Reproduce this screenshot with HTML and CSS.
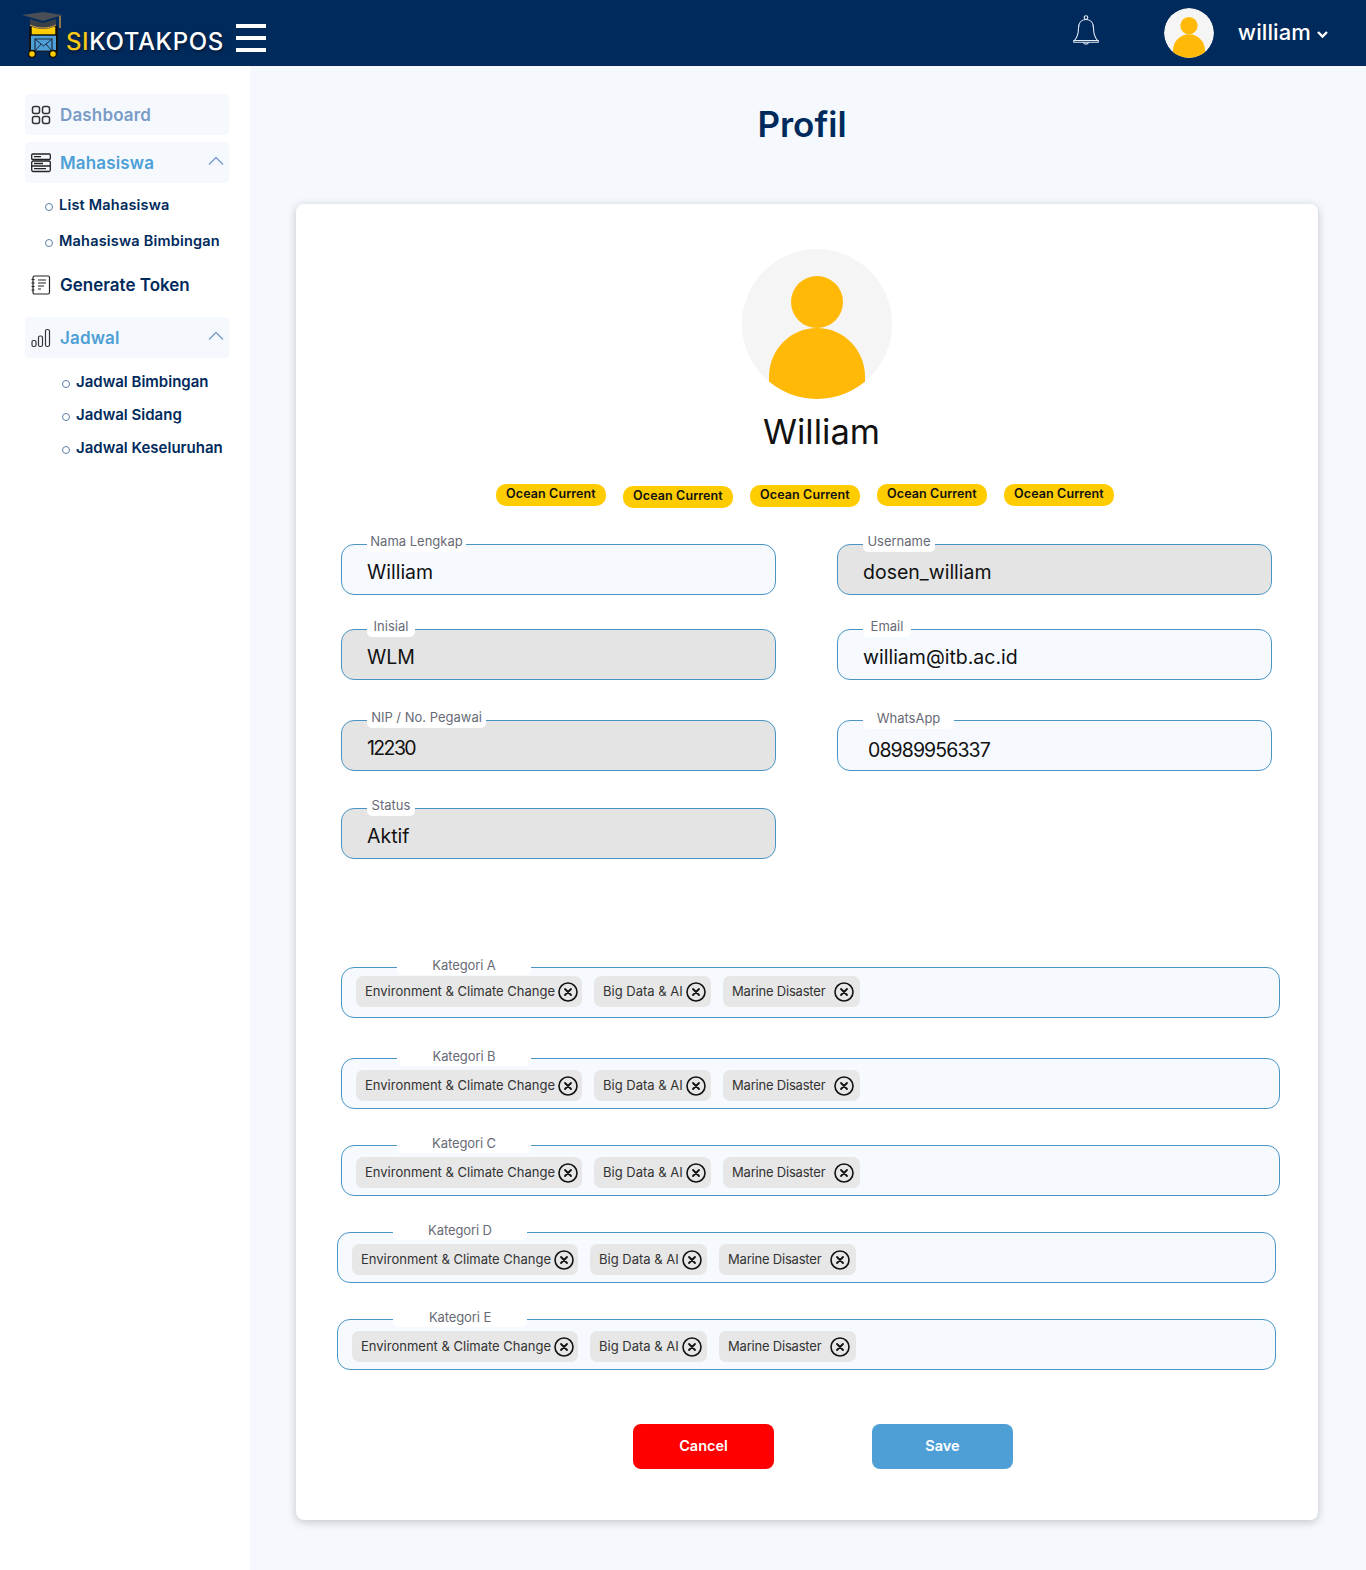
FILE: index.html
```html
<!DOCTYPE html>
<html lang="id">
<head>
    <meta charset="UTF-8">
    <meta name="viewport" content="width=device-width, initial-scale=1.0">
    <title>Profil - SIKOTAKPOS</title>
    <link rel="stylesheet" href="styles.css">
</head>
<body>
    <svg class="icon-defs" width="0" height="0">
        <symbol id="chip-close" viewBox="0 0 20 20">
            <circle cx="10" cy="10" r="9" fill="none" stroke="#111" stroke-width="1.6"/>
            <path d="M7 7l6 6M13 7l-6 6" stroke="#111" stroke-width="1.8" stroke-linecap="round"/>
        </symbol>
        <symbol id="chevron-up" viewBox="0 0 16 10">
            <path d="M1 8.5L8 1.5l7 7" fill="none" stroke="#7a9cc6" stroke-width="1.4"/>
        </symbol>
        <symbol id="person" viewBox="0 0 150 150">
            <circle cx="75" cy="75" r="75" fill="#f5f5f5"/>
            <clipPath id="person-clip"><circle cx="75" cy="75" r="75"/></clipPath>
            <g clip-path="url(#person-clip)" fill="#ffb906">
                <ellipse cx="75" cy="53" rx="26" ry="26"/>
                <path d="M27 150V128C27 100 49 79 75 79s48 21 48 49v22z"/>
            </g>
        </symbol>
    </svg>

    <header class="topbar">
        <div class="brand">
            <svg class="brand-logo" width="44" height="46" viewBox="0 0 44 46">
                <path d="M9 16h27v23H9z" fill="#4e9fd5" stroke="#111" stroke-width="2"/>
                <path d="M10 14h25v9H10z" fill="#ffcc00" stroke="#111" stroke-width="1.5"/>
                <path d="M14 27h17v12H14z" fill="#4e9fd5" stroke="#1c2b45" stroke-width="1.2"/>
                <path d="M14 27l8.500 7 8.500-7M14 39l6-7M31 39l-6-7" fill="none" stroke="#1c2b45" stroke-width="1"/>
                <circle cx="11" cy="42" r="3.500" fill="#ffcc00" stroke="#111" stroke-width="1.500"/>
                <circle cx="32" cy="42" r="3.500" fill="#ffcc00" stroke="#111" stroke-width="1.500"/>
                <path d="M1 3L22 0l20 3-20 6z" fill="#4a4f57"/>
                <path d="M9 7v7c8 4 18 4 26 0V7l-13 4z" fill="#3c4048"/>
                <path d="M9 13c8 4 18 4 26 0" fill="none" stroke="#d9a441" stroke-width="1"/>
                <path d="M39 4v12" stroke="#d9a441" stroke-width="1.300"/>
            </svg>
            <span class="brand-name"><span class="brand-si">SI</span>KOTAKPOS</span>
        </div>
        <div class="hamburger"><span></span><span></span><span></span></div>
        <div class="topbar-right">
            <svg class="bell" width="26" height="31" viewBox="0 0 26 31" fill="none" stroke="#e4ecf5" stroke-width="1.100">
                <circle cx="13" cy="2.500" r="1.800"/>
                <path d="M13 4.500c-5 0-7.500 3.800-7.500 8.500 0 5-1 9-4 12.500h23c-3-3.500-4-7.500-4-12.500 0-4.700-2.500-8.500-7.500-8.500z"/>
                <path d="M.8 25.500h24.400v1.800H.8zM10.500 27.300c.3 2.400 4.700 2.400 5 0"/>
            </svg>
            <svg class="top-avatar" width="50" height="50"><use href="#person"/></svg>
            <span class="top-user">william</span>
            <svg class="top-caret" width="13" height="9" viewBox="0 0 12 9">
                <path d="M1.500 2l4.500 4.500L10.500 2" fill="none" stroke="#fff" stroke-width="2.400"/>
            </svg>
        </div>
    </header>

    <div class="layout">
        <aside class="sidebar">
            <a class="menu-item menu-box menu-muted" href="#">
                <svg class="menu-icon" width="20" height="20" viewBox="0 0 20 20" fill="none" stroke="#333" stroke-width="1.500">
                    <rect x="1.500" y="1.500" width="7" height="7" rx="2"/><rect x="11.500" y="1.500" width="7" height="7" rx="2"/>
                    <rect x="1.500" y="11.500" width="7" height="7" rx="2"/><rect x="11.500" y="11.500" width="7" height="7" rx="2"/>
                </svg>
                Dashboard
            </a>
            <a class="menu-item menu-box menu-open menu-mahasiswa" href="#">
                <svg class="menu-icon" width="20" height="20" viewBox="0 0 20 20" fill="none" stroke="#222" stroke-width="1.300">
                    <rect x=".7" y="1" width="18.600" height="5.500" rx="1"/><rect x=".7" y="8" width="18.600" height="10.500" rx="1.500"/>
                    <path d="M.7 13h18.600M3 3.700h7M3 10.500h9M3 15.700h12"/>
                </svg>
                Mahasiswa
                <svg class="menu-chevron" width="16" height="10"><use href="#chevron-up"/></svg>
            </a>
            <ul class="submenu submenu-one">
                <li>List Mahasiswa</li>
                <li>Mahasiswa Bimbingan</li>
            </ul>
            <a class="menu-item menu-token" href="#">
                <svg class="menu-icon" width="20" height="20" viewBox="0 0 20 20" fill="none" stroke="#222" stroke-width="1.200">
                    <rect x="2" y="1" width="16.500" height="18" rx="1.500"/>
                    <path d="M.5 4.500h3M.5 8h3M.5 11.500h3M.5 15h3M7 5h8M7 8h8M7 11h6M7 14h3"/>
                </svg>
                Generate Token
            </a>
            <a class="menu-item menu-box menu-open menu-jadwal" href="#">
                <svg class="menu-icon" width="20" height="20" viewBox="0 0 20 20" fill="none" stroke="#333" stroke-width="1.200">
                    <rect x="1" y="12.500" width="4" height="6" rx="1.500"/><rect x="7.500" y="8" width="4" height="10.500" rx="1.500"/>
                    <rect x="14.500" y="1.500" width="4" height="17" rx="1.800"/>
                </svg>
                Jadwal
                <svg class="menu-chevron" width="16" height="10"><use href="#chevron-up"/></svg>
            </a>
            <ul class="submenu submenu-two">
                <li>Jadwal Bimbingan</li>
                <li>Jadwal Sidang</li>
                <li>Jadwal Keseluruhan</li>
            </ul>
        </aside>

        <main class="content">
            <h1 class="page-title">Profil</h1>
            <section class="card">
                <svg class="avatar" width="150" height="150"><use href="#person"/></svg>
                <h2 class="profile-name">William</h2>
                <div class="badges">
                    <span class="badge">Ocean Current</span>
                    <span class="badge badge-low">Ocean Current</span>
                    <span class="badge badge-mid">Ocean Current</span>
                    <span class="badge">Ocean Current</span>
                    <span class="badge">Ocean Current</span>
                </div>

                <div class="fields">
                    <div class="field">
                        <label class="field-label label-nama">Nama Lengkap</label>
                        <div class="field-value">William</div>
                    </div>
                    <div class="field field-off">
                        <label class="field-label label-username">Username</label>
                        <div class="field-value">dosen_william</div>
                    </div>
                    <div class="field field-off field-up">
                        <label class="field-label label-short">Inisial</label>
                        <div class="field-value">WLM</div>
                    </div>
                    <div class="field field-up">
                        <label class="field-label label-short">Email</label>
                        <div class="field-value">william@itb.ac.id</div>
                    </div>
                    <div class="field field-off">
                        <label class="field-label label-nip">NIP / No. Pegawai</label>
                        <div class="field-value value-nip">12230</div>
                    </div>
                    <div class="field">
                        <label class="field-label label-wa">WhatsApp</label>
                        <div class="field-value value-wa">08989956337</div>
                    </div>
                    <div class="field field-off">
                        <label class="field-label label-short">Status</label>
                        <div class="field-value">Aktif</div>
                    </div>
                </div>

                <div class="categories">
                    <div class="category">
                        <label class="category-label">Kategori A</label>
                        <div class="chip chip-long">Environment &amp; Climate Change<svg width="20" height="20"><use href="#chip-close"/></svg></div>
                        <div class="chip chip-mid">Big Data &amp; AI<svg width="20" height="20"><use href="#chip-close"/></svg></div>
                        <div class="chip chip-last">Marine Disaster<svg width="20" height="20"><use href="#chip-close"/></svg></div>
                    </div>
                    <div class="category category-low">
                        <label class="category-label">Kategori B</label>
                        <div class="chip chip-long">Environment &amp; Climate Change<svg width="20" height="20"><use href="#chip-close"/></svg></div>
                        <div class="chip chip-mid">Big Data &amp; AI<svg width="20" height="20"><use href="#chip-close"/></svg></div>
                        <div class="chip chip-last">Marine Disaster<svg width="20" height="20"><use href="#chip-close"/></svg></div>
                    </div>
                    <div class="category category-low category-tight">
                        <label class="category-label">Kategori C</label>
                        <div class="chip chip-long">Environment &amp; Climate Change<svg width="20" height="20"><use href="#chip-close"/></svg></div>
                        <div class="chip chip-mid">Big Data &amp; AI<svg width="20" height="20"><use href="#chip-close"/></svg></div>
                        <div class="chip chip-last">Marine Disaster<svg width="20" height="20"><use href="#chip-close"/></svg></div>
                    </div>
                    <div class="category category-low category-tight category-shift">
                        <label class="category-label">Kategori D</label>
                        <div class="chip chip-long">Environment &amp; Climate Change<svg width="20" height="20"><use href="#chip-close"/></svg></div>
                        <div class="chip chip-mid">Big Data &amp; AI<svg width="20" height="20"><use href="#chip-close"/></svg></div>
                        <div class="chip chip-last">Marine Disaster<svg width="20" height="20"><use href="#chip-close"/></svg></div>
                    </div>
                    <div class="category category-low category-tight category-shift">
                        <label class="category-label">Kategori E</label>
                        <div class="chip chip-long">Environment &amp; Climate Change<svg width="20" height="20"><use href="#chip-close"/></svg></div>
                        <div class="chip chip-mid">Big Data &amp; AI<svg width="20" height="20"><use href="#chip-close"/></svg></div>
                        <div class="chip chip-last">Marine Disaster<svg width="20" height="20"><use href="#chip-close"/></svg></div>
                    </div>
                </div>

                <div class="actions">
                    <button class="btn btn-cancel" type="button">Cancel</button>
                    <button class="btn btn-save" type="button">Save</button>
                </div>
            </section>
        </main>
    </div>
</body>
</html>
```
FILE: styles.css
```css
* {
    box-sizing: border-box;
}
body {
    margin: 0;
    font-family: Inter, "Open Sans", sans-serif;
    background-color: #f5f9fe;
    color: #111;
}
.icon-defs {
    display: block;
    height: 0;
}

/* top bar */
.topbar {
    height: 66px;
    background-color: #002a5c;
    display: flex;
    align-items: flex-start;
}
.brand {
    display: flex;
    align-items: flex-start;
    margin-left: 21px;
    padding-top: 12px;
}
.brand-logo {
    display: block;
}
.brand-name {
    margin: 15px 0 0 1px;
    font-size: 24px;
    line-height: 30px;
    font-weight: 500;
    letter-spacing: 0.6px;
    color: #fff;
    text-shadow: 1px 2px 3px rgba(0, 0, 0, 0.4);
}
.brand-si {
    color: #f7c815;
}
.hamburger {
    margin: 24px 0 0 12px;
    width: 30px;
    height: 28px;
    display: flex;
    flex-direction: column;
    justify-content: space-between;
}
.hamburger span {
    height: 4px;
    background-color: #fff;
}
.topbar-right {
    margin-left: auto;
    padding-right: 37px;
    display: flex;
    align-items: center;
    height: 66px;
}
.bell {
    margin: -6px 65px 0 0;
}
.top-avatar {
    display: block;
    border-radius: 50%;
}
.top-user {
    margin-left: 24px;
    font-size: 22px;
    font-weight: 500;
    letter-spacing: 0.1px;
    color: #fff;
    position: relative;
    top: -1px;
}
.top-caret {
    margin: 3px 0 0 5px;
}

/* sidebar */
.layout {
    display: flex;
    min-height: 1504px;
}
.sidebar {
    width: 250px;
    flex-shrink: 0;
    background-color: #fff;
    padding: 28px 21px 0 25px;
}
.menu-item {
    display: flex;
    align-items: center;
    height: 41px;
    padding-left: 6px;
    font-size: 17px;
    font-weight: 600;
    letter-spacing: 0.15px;
    color: #002a5c;
    text-decoration: none;
}
.menu-icon {
    margin-right: 9px;
    flex-shrink: 0;
}
.menu-box {
    background-color: #f5f9fe;
    border-radius: 4px;
}
.menu-muted {
    color: #7a9cc6;
}
.menu-open {
    color: #4e9fd5;
}
.menu-mahasiswa {
    margin-top: 7px;
}
.menu-token {
    margin-top: 5px;
    letter-spacing: 0;
}
.menu-jadwal {
    margin-top: 12px;
}
.menu-chevron {
    margin: -3px 5px 0 auto;
}
.submenu {
    list-style: none;
    margin: 0;
    padding: 0;
    font-weight: 600;
    color: #002a5c;
}
.submenu li {
    position: relative;
}
.submenu li::before {
    content: "";
    position: absolute;
    top: 50%;
    width: 6px;
    height: 6px;
    margin-top: -2px;
    border: 1px solid #5f7fa8;
    border-radius: 50%;
}
.submenu-one {
    padding: 4px 0 0 34px;
    font-size: 14.5px;
    letter-spacing: 0.2px;
}
.submenu-one li {
    height: 36px;
    line-height: 36px;
}
.submenu-one li::before {
    left: -14px;
}
.submenu-two {
    padding: 7px 0 0 51px;
    font-size: 15px;
}
.submenu-two li {
    height: 33px;
    line-height: 33px;
}
.submenu-two li::before {
    left: -14px;
}

/* main column */
.content {
    flex: 1;
    padding: 0 48px 0 46px;
}
.page-title {
    margin: 36px 10px 0 0;
    height: 44px;
    line-height: 44px;
    text-align: center;
    font-size: 35px;
    font-weight: 600;
    color: #002a5c;
}
.card {
    margin-top: 58px;
    height: 1316px;
    padding: 45px 0 0 45px;
    background-color: #fff;
    border-radius: 8px;
    box-shadow: 0 2px 10px rgba(0, 0, 0, 0.22);
}
.avatar {
    display: block;
    margin-left: 401px;
}
.profile-name {
    margin: 12px 0 0 422px;
    height: 42px;
    line-height: 42px;
    font-size: 34.5px;
    font-weight: 400;
    color: #111;
}
.badges {
    margin: 31px 0 0 155px;
    display: flex;
    gap: 17px;
    height: 24px;
}
.badge {
    width: 110px;
    height: 22px;
    line-height: 20px;
    text-align: center;
    font-size: 12.5px;
    letter-spacing: 0.1px;
    font-weight: 600;
    background-color: #ffcc00;
    border-radius: 10px;
}
.badge-low {
    margin-top: 2px;
}
.badge-mid {
    margin-top: 1px;
}

/* profile fields */
.fields {
    margin-top: 36px;
    display: grid;
    grid-template-columns: 435px 435px;
    grid-template-rows: 51px 51px 51px 51px;
    column-gap: 61px;
    row-gap: 37px;
    width: 931px;
}
.field {
    position: relative;
    height: 51px;
    padding: 14px 0 0 25px;
    background-color: #f6faff;
    border: 1px solid #4a95c4;
    border-radius: 13px;
    font-size: 19.5px;
    line-height: 26px;
}
.field-off {
    background-color: #e4e4e4;
}
.field-up {
    margin-top: -3px;
}
.field-label {
    position: absolute;
    left: 25px;
    top: -9px;
    height: 16px;
    line-height: 11px;
    padding: 0 5px;
    font-size: 13px;
    color: #686b76;
    text-align: center;
    background-color: #fff;
    border-radius: 0 0 5px 5px;
}
.label-short {
    width: 48px;
    padding: 0;
}
.label-username {
    width: 72px;
    padding: 0;
}
.label-nama {
    width: 99px;
    padding: 0;
}
.label-nip {
    width: 119px;
    padding: 0;
}
.label-wa {
    top: -8px;
    width: 91px;
    padding: 0;
}
.value-nip {
    letter-spacing: -1.6px;
}
.value-wa {
    padding: 2px 0 0 5px;
    letter-spacing: -0.9px;
}

/* kategori */
.categories {
    margin-top: 108px;
    width: 939px;
}
.category {
    position: relative;
    height: 51px;
    padding: 8px 0 0 14px;
    display: flex;
    align-items: flex-start;
    gap: 12px;
    background-color: #f6faff;
    border: 1px solid #4a95c4;
    border-radius: 13px;
}
.category-low {
    margin-top: 40px;
    padding-top: 11px;
}
.category-tight {
    margin-top: 36px;
}
.category-shift {
    margin-left: -4px;
    margin-right: 4px;
}
.category-label {
    position: absolute;
    left: 55px;
    top: -8px;
    width: 134px;
    height: 15px;
    line-height: 11px;
    text-align: center;
    font-size: 13px;
    letter-spacing: -0.1px;
    color: #686b76;
    background-color: #fff;
    border-radius: 0 0 5px 5px;
}
.chip {
    height: 31px;
    display: flex;
    align-items: center;
    padding-left: 9px;
    padding-bottom: 2px;
    font-size: 13px;
    color: #333;
    background-color: #e7e7e7;
    border-radius: 7px;
}
.chip svg {
    margin: 3px 0 0 auto;
    flex-shrink: 0;
}
.chip-long {
    width: 226px;
    padding-right: 4px;
}
.chip-mid {
    width: 117px;
    padding-right: 5px;
}
.chip-last {
    width: 137px;
    padding-right: 6px;
    letter-spacing: -0.2px;
}

/* tombol */
.actions {
    margin: 54px 0 0 292px;
    display: flex;
    gap: 98px;
}
.btn {
    width: 141px;
    height: 45px;
    padding: 0 0 3px;
    border: none;
    border-radius: 8px;
    font-family: inherit;
    font-size: 14.5px;
    font-weight: 600;
    color: #fff;
    cursor: pointer;
}
.btn-cancel {
    background-color: #ff0000;
}
.btn-save {
    background-color: #4e9fd5;
}
```
